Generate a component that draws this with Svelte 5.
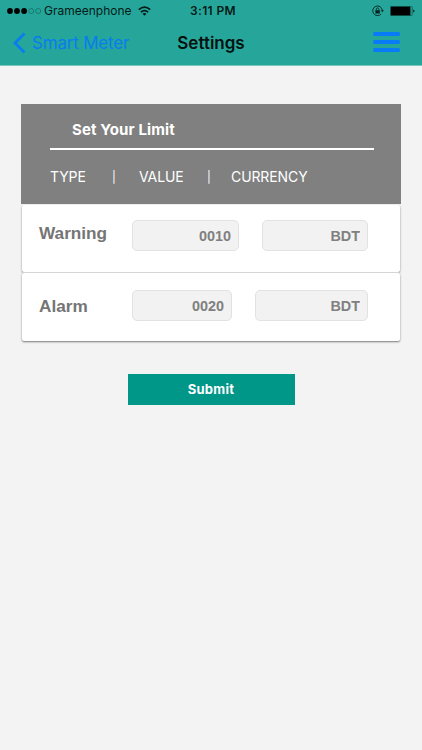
<script>
  const columns = ['TYPE', '|', 'VALUE', '|', 'CURRENCY'];

  let limits = $state([
    { name: 'Warning', value: '0010', currency: 'BDT' },
    { name: 'Alarm', value: '0020', currency: 'BDT' }
  ]);
</script>

<div class="screen">
  <header>
    <div class="status">
      <svg class="signal" width="36" height="8" viewBox="0 0 36 8">
        <circle cx="3" cy="4" r="2.9" />
        <circle cx="10" cy="4" r="2.9" />
        <circle cx="17.1" cy="4" r="2.9" />
        <circle class="empty" cx="24.2" cy="4" r="2.5" />
        <circle class="empty" cx="31.2" cy="4" r="2.5" />
      </svg>
      <span class="carrier">Grameenphone</span>
      <svg class="wifi" width="13" height="10" viewBox="0 0 13 10">
        <path d="M.8 3.7Q6.5-1.3 12.2 3.7M2.9 6.1Q6.5 3 10.1 6.1" fill="none" stroke="#041b18" stroke-width="1.7" />
        <path d="M4.5 7.8Q6.5 6.2 8.5 7.8L6.5 9.8z" fill="#041b18" />
      </svg>
      <span class="time">3:11 PM</span>
      <svg class="lock" width="12" height="12" viewBox="0 0 12 12">
        <path d="M9.1 9A4.8 4.8 0 1 1 10.3 5.2" fill="none" stroke="#06231f" stroke-width=".9" />
        <path d="M8.7 5.2h3.2l-1.6 2z" fill="#06231f" />
        <rect x="3.4" y="5.2" width="4.4" height="3.3" fill="#06231f" />
        <path d="M4.3 5.4V4.2a1.3 1.3 0 0 1 2.6 0v1.2" fill="none" stroke="#06231f" stroke-width=".8" />
      </svg>
      <svg class="battery" width="25" height="10" viewBox="0 0 25 10">
        <rect x=".4" y=".2" width="21.8" height="9.6" rx="1" fill="none" stroke="#0b5148" stroke-width=".7" />
        <rect x=".8" y=".6" width="19.6" height="8.8" fill="#000" />
        <path d="M23.2 3.4q1.3.3 1.3 1.6t-1.3 1.6z" fill="#06231f" />
      </svg>
    </div>

    <nav>
      <button class="back">
        <svg width="13" height="22" viewBox="0 0 13 22">
          <path d="M11.5 1.5L2 11l9.5 9.5" fill="none" stroke="#087cf0" stroke-width="2.8" />
        </svg>
        <span>Smart Meter</span>
      </button>
      <h1>Settings</h1>
      <button class="menu" aria-label="Menu">
        <i></i>
        <i></i>
        <i></i>
      </button>
    </nav>
  </header>

  <main>
    <div class="table-head">
      <h2>Set Your Limit</h2>
      <div class="columns">
        {#each columns as column}
          <span class:divider={column === '|'}>{column}</span>
        {/each}
      </div>
    </div>

    <div class="rows">
      {#each limits as limit}
        <div class="row">
          <label for={limit.name}>{limit.name}</label>
          <input id={limit.name} class="value" bind:value={limit.value} />
          <input class="currency" aria-label="Currency" bind:value={limit.currency} />
        </div>
      {/each}
    </div>

    <button class="submit">Submit</button>
  </main>
</div>

<style>
  :global(body) {
    background: #f3f3f3;
  }

  .screen {
    min-height: 750px;
    font-family: Inter, "Liberation Sans", sans-serif;
    background: #f3f3f3;
  }

  button {
    border: none;
    padding: 0;
    background: none;
    font-family: inherit;
  }

  header {
    box-sizing: border-box;
    height: 66px;
    background: #26a69a;
    border-bottom: 1px solid #7cc5bd;
  }

  .status {
    display: flex;
    align-items: center;
    height: 21px;
    padding: 0 7px;
    font-size: 12px;
    color: #041b18;
  }

  .signal {
    flex: none;
    fill: #000;
  }

  .signal .empty {
    fill: none;
    stroke: #14675e;
    stroke-width: 0.7;
  }

  .carrier {
    width: 94px;
    padding-left: 1px;
  }

  .time {
    margin-left: 39px;
    font-weight: 600;
    letter-spacing: 0.35px;
    white-space: nowrap;
  }

  .lock {
    margin-left: auto;
    margin-right: 6px;
  }

  nav {
    display: grid;
    grid-template-columns: 1fr auto 1fr;
    align-items: center;
    height: 44px;
    padding: 0 22px;
  }

  .back {
    display: flex;
    align-items: center;
    gap: 6px;
    margin-left: -9px;
    font-size: 17px;
    letter-spacing: -0.2px;
    color: #087cf0;
    white-space: nowrap;
  }

  h1 {
    margin: 0;
    font-size: 17px;
    font-weight: 600;
    color: #04110f;
  }

  .menu {
    display: flex;
    flex-direction: column;
    justify-self: end;
    gap: 3.6px;
    width: 27px;
    margin-top: -2px;
  }

  .menu i {
    height: 4px;
    border-radius: 1.5px;
    background: #087cf8;
  }

  main {
    padding: 38px 21px 0;
  }

  .table-head {
    box-sizing: border-box;
    height: 100px;
    padding: 0 27px 0 29px;
    background: #808080;
    color: #fff;
  }

  h2 {
    box-sizing: border-box;
    height: 46px;
    margin: 0;
    padding: 16px 0 0 22px;
    border-bottom: 2px solid #fff;
    font-size: 15px;
    line-height: 19px;
    font-weight: 700;
    letter-spacing: 0.12px;
  }

  .columns {
    display: grid;
    grid-template-columns: 61px 28px 67px 25px 1fr;
    padding-top: 18px;
    font-size: 14px;
    line-height: 18px;
    letter-spacing: -0.1px;
  }

  .divider {
    padding-left: 1px;
    font-size: 11.5px;
  }

  .rows {
    margin: 1px 1px 0;
  }

  .row {
    box-sizing: border-box;
    display: flex;
    height: 67px;
    padding: 15px 32px 0 17px;
    border-radius: 2px;
    background: #fff;
    box-shadow: 0 1px 2px rgba(0, 0, 0, 0.5);
  }

  .row + .row {
    height: 68px;
    margin-top: 1px;
    padding-top: 17px;
    box-shadow: 0 1px 2px rgba(0, 0, 0, 0.5), 0 -1px 0 #dcdcdc;
  }

  label {
    width: 93px;
    font: bold 17.2px/27px "Liberation Sans", sans-serif;
    color: #757575;
  }

  .row + .row label {
    line-height: 33px;
  }

  input {
    box-sizing: border-box;
    height: 31px;
    min-width: 0;
    padding: 0 7px;
    border: 1px solid #e2e2e2;
    border-radius: 5px;
    background: #f2f2f2;
    font: bold 14.4px "Liberation Sans", sans-serif;
    text-align: right;
    color: #808080;
  }

  .value {
    width: 107px;
    margin-right: 23px;
  }

  .currency {
    width: 106px;
  }

  .row + .row .value {
    width: 100px;
  }

  .row + .row .currency {
    width: 113px;
  }

  .submit {
    display: block;
    width: 167px;
    height: 31px;
    margin: 33px 0 0 106.5px;
    padding-bottom: 2px;
    background: #009688;
    color: #fff;
    font-size: 13px;
    font-weight: 700;
    letter-spacing: 0.3px;
  }
</style>
